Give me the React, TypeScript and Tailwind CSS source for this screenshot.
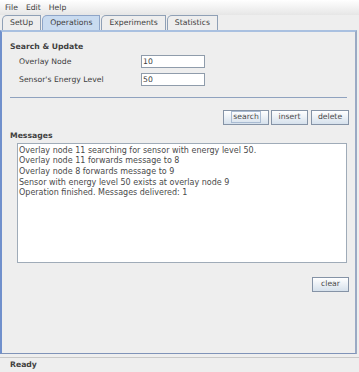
import React from "react";

const messages = [
  "Overlay node 11 searching for sensor with energy level 50.",
  "Overlay node 11 forwards message to 8",
  "Overlay node 8 forwards message to 9",
  "Sensor with energy level 50 exists at overlay node 9",
  "Operation finished. Messages delivered: 1",
];

const tabs = ["SetUp", "Operations", "Experiments", "Statistics"];

function Btn({ label, focused, w }: { label: string; focused?: boolean; w: string }) {
  return (
    <button
      type="button"
      className={`${w} h-[15px] flex items-center justify-center border border-[#8593a6] bg-gradient-to-b from-[#ffffff] to-[#d6e1ec] text-[7.7px] text-[#4a4a4a]`}
    >
      <span className={focused ? "outline outline-1 outline-[#a9bbd2] px-[1px] leading-[10px]" : "leading-[10px]"}>
        {label}
      </span>
    </button>
  );
}

export default function App() {
  return (
    <div
      className="w-[359px] h-[372px] flex flex-col bg-[#eeeeee] text-[#404040] overflow-hidden"
      style={{ fontFamily: '"DejaVu Sans", sans-serif' }}
    >
      {/* menu bar */}
      <div className="h-[15px] flex items-center gap-[8px] pl-[5px] text-[7.7px] bg-gradient-to-b from-[#ffffff] to-[#e6e6e6]">
        <span>File</span>
        <span>Edit</span>
        <span>Help</span>
      </div>

      {/* tab strip */}
      <div className="h-[15px] flex items-end pl-[2px] gap-[1px]">
        {tabs.map((t) => {
          const sel = t === "Operations";
          return (
            <div
              key={t}
              className={`h-[15px] flex items-center px-[7px] text-[7.7px] border border-b-0 rounded-tl-[5px] ${
                sel ? "bg-[#c9dbf0] border-[#8ea5c8]" : "bg-[#eeeeee] border-[#8fa0b6]"
              }`}
            >
              {t}
            </div>
          );
        })}
      </div>

      {/* panel */}
      <div className="flex-1 flex flex-col border-t-2 border-t-[#a9c0e0] border-l-2 border-l-[#7090cc] border-r-2 border-r-[#9aaac4] border-b border-b-[#7f93b8] mr-[2px] pl-[8px] pr-[8px]">
        <div className="pt-[9px] text-[7.7px] font-bold">Search &amp; Update</div>
        <div className="mt-[3px] flex flex-col gap-[6px] pl-[9px]">
          <div className="flex items-center h-[12px]">
            <span className="w-[122px] text-[7.7px]">Overlay Node</span>
            <div className="w-[64px] h-[13px] bg-white border border-[#8f9cab] text-[7.7px] pl-[1px] leading-[11px]">10</div>
          </div>
          <div className="flex items-center h-[12px]">
            <span className="w-[122px] text-[7.7px]">Sensor's Energy Level</span>
            <div className="w-[64px] h-[13px] bg-white border border-[#8f9cab] text-[7.7px] pl-[1px] leading-[11px]">50</div>
          </div>
        </div>
        <div className="mt-[11px] h-px bg-[#8fa2bf]" />
        <div className="mt-[12px] -mr-[2px] flex justify-end">
          <Btn label="search" focused w="w-[46px]" />
          <div className="w-[2px]" />
          <Btn label="insert" w="w-[37px]" />
          <div className="w-[3px]" />
          <Btn label="delete" w="w-[38px]" />
        </div>
        <div className="mt-[6px] text-[7.7px] leading-[10px] font-bold">Messages</div>
        <div className="mt-[2px] ml-[7px] h-[120px] bg-white border border-[#9fabb8] pl-[1px] pt-[2px] text-[8px] leading-[10.7px] text-[#4a4a4a]">
          {messages.map((m) => (
            <div key={m} className="whitespace-nowrap">{m}</div>
          ))}
        </div>
        <div className="mt-[14px] -mr-[2px] flex justify-end">
          <Btn label="clear" w="w-[37px]" />
        </div>
      </div>

      {/* status bar */}
      <div className="h-[18px] flex items-end">
        <div className="w-full h-[15px] border-t border-[#c8c8c8] flex items-center pl-[10px] text-[7.7px] font-bold">
          Ready
        </div>
      </div>
    </div>
  );
}
